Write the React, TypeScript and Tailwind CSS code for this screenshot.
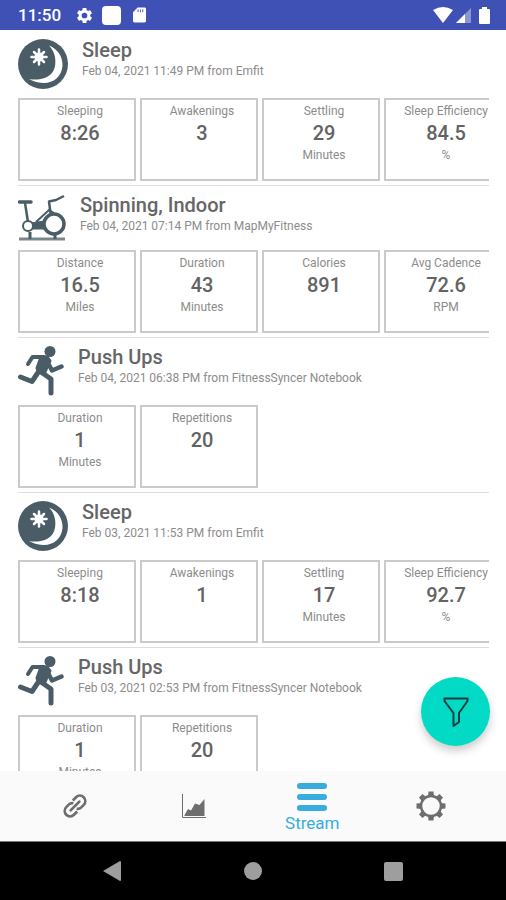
import React from "react";

type Metric = { label: string; value: string; unit?: string };
type Activity = {
  id: number;
  kind: "sleep" | "bike" | "run";
  title: string;
  detail: string;
  metrics: Metric[];
};

const activities: Activity[] = [
  {
    id: 1,
    kind: "sleep",
    title: "Sleep",
    detail: "Feb 04, 2021 11:49 PM from Emfit",
    metrics: [
      { label: "Sleeping", value: "8:26" },
      { label: "Awakenings", value: "3" },
      { label: "Settling", value: "29", unit: "Minutes" },
      { label: "Sleep Efficiency", value: "84.5", unit: "%" },
    ],
  },
  {
    id: 2,
    kind: "bike",
    title: "Spinning, Indoor",
    detail: "Feb 04, 2021 07:14 PM from MapMyFitness",
    metrics: [
      { label: "Distance", value: "16.5", unit: "Miles" },
      { label: "Duration", value: "43", unit: "Minutes" },
      { label: "Calories", value: "891" },
      { label: "Avg Cadence", value: "72.6", unit: "RPM" },
    ],
  },
  {
    id: 3,
    kind: "run",
    title: "Push Ups",
    detail: "Feb 04, 2021 06:38 PM from FitnessSyncer Notebook",
    metrics: [
      { label: "Duration", value: "1", unit: "Minutes" },
      { label: "Repetitions", value: "20" },
    ],
  },
  {
    id: 4,
    kind: "sleep",
    title: "Sleep",
    detail: "Feb 03, 2021 11:53 PM from Emfit",
    metrics: [
      { label: "Sleeping", value: "8:18" },
      { label: "Awakenings", value: "1" },
      { label: "Settling", value: "17", unit: "Minutes" },
      { label: "Sleep Efficiency", value: "92.7", unit: "%" },
    ],
  },
  {
    id: 5,
    kind: "run",
    title: "Push Ups",
    detail: "Feb 03, 2021 02:53 PM from FitnessSyncer Notebook",
    metrics: [
      { label: "Duration", value: "1", unit: "Minutes" },
      { label: "Repetitions", value: "20" },
    ],
  },
];

function SleepIcon() {
  return (
    <svg width="50" height="50" viewBox="0 0 50 50" className="shrink-0" aria-hidden="true">
      <circle cx="25" cy="25" r="25" fill="#4a5d66" />
      <path d="M31 6.500C40 10 45 18 44.500 27C43.500 38 35 44.500 25 44C19 43.500 15 42.500 11 40C19 41.500 28 40 33 35C37 31 38 25 37 18C36.200 13.500 34 9.500 31 6.500Z" fill="#fff" />
      <g stroke="#fff" strokeWidth="2.500" strokeLinecap="round">
        <path d="M21 10.500V25.500M13.500 18H28.500M16 13L26 23M26 13L16 23" />
      </g>
      <circle cx="21" cy="18" r="4.500" fill="#fff" />
    </svg>
  );
}

function BikeIcon() {
  return (
    <svg width="48" height="47" viewBox="0 0 48 47" className="shrink-0" fill="none" stroke="#4a5d66" aria-hidden="true">
      <path d="M1 45H47" stroke="#7c878d" strokeWidth="3" />
      <path d="M12 38V45M37 38V45" strokeWidth="3" />
      <path d="M1.500 8H13" strokeWidth="3.500" strokeLinecap="round" />
      <path d="M7 9L10 28" strokeWidth="2.500" />
      <path d="M32.500 19L31 7.500L38 6L46 2" strokeWidth="2.500" strokeLinejoin="round" />
      <path d="M18 28L31 16L36 19" strokeWidth="2" />
      <path d="M13 29L26 27V35L13 35Z" fill="#4a5d66" strokeWidth="1" />
      <circle cx="10" cy="32" r="5" fill="#fff" strokeWidth="2" />
      <circle cx="36" cy="30" r="10" fill="#fff" strokeWidth="3.500" />
    </svg>
  );
}

function RunIcon() {
  return (
    <svg width="46" height="50" viewBox="0 0 46 50" className="shrink-0" fill="none" stroke="#4a5d66" strokeLinecap="round" strokeLinejoin="round" aria-hidden="true">
      <circle cx="32" cy="5.500" r="5.500" fill="#4a5d66" stroke="none" />
      <path d="M23 11H29L32 15L27 26L20 25L19 22Z" fill="#4a5d66" strokeWidth="3" />
      <path d="M10 18L14.500 11H26" strokeWidth="4" />
      <path d="M30 17L34 24.500L43.500 20.500" strokeWidth="4.500" />
      <path d="M21 25L14 35.500L2.500 31" strokeWidth="5" />
      <path d="M23 26L33 33V47" strokeWidth="5" />
    </svg>
  );
}

function ActivityIcon({ kind }: { kind: Activity["kind"] }) {
  if (kind === "sleep") return <SleepIcon />;
  if (kind === "bike") return <BikeIcon />;
  return <RunIcon />;
}

function MetricCard({ label, value, unit }: Metric) {
  return (
    <li className="h-[83px] w-[118px] shrink-0 border-2 border-[#cacaca] pt-[3px] pl-1.5 text-center text-xs leading-4 text-[#8c8c8c]">
      <p className="whitespace-nowrap">{label}</p>
      <p className="my-0.5 text-xl leading-6 font-medium text-[#636363]">{value}</p>
      {unit && <p>{unit}</p>}
    </li>
  );
}

function ActivityEntry({ activity }: { activity: Activity }) {
  return (
    <article className="border-b border-[#dedede] pt-2 pb-1">
      <header className="flex gap-3.5">
        <ActivityIcon kind={activity.kind} />
        <div className="h-[47px]">
          <h2 className="text-xl leading-[22px] font-medium text-[#666]">{activity.title}</h2>
          <p className="mt-0.5 text-xs leading-4 text-[#8c8c8c]">{activity.detail}</p>
        </div>
      </header>
      <ul className="mt-[9px] flex gap-1 overflow-hidden">
        {activity.metrics.map((m) => (
          <MetricCard key={m.label} {...m} />
        ))}
      </ul>
    </article>
  );
}

const gearTeeth = [0, 45, 90, 135, 180, 225, 270, 315];

function StatusBar() {
  return (
    <header className="flex h-[30px] shrink-0 items-center bg-[#3f51b5] pr-4 pl-[18px] text-white">
      <span className="text-[17px] leading-6 font-medium">11:50</span>
      <svg className="ml-3.5" width="19" height="19" viewBox="0 0 24 24" fill="currentColor" aria-hidden="true">
        <path d="M19.140 12.940c.04-.3.060-.61.060-.94s-.02-.64-.07-.94l2.030-1.580a.49.49 0 0 0 .12-.61l-1.920-3.320a.49.49 0 0 0-.59-.22l-2.390.96a7 7 0 0 0-1.620-.94l-.36-2.540a.48.48 0 0 0-.48-.41h-3.840a.48.48 0 0 0-.47.41l-.36 2.540a7.300 7.300 0 0 0-1.620.94l-2.390-.96a.48.48 0 0 0-.59.22L2.740 8.870a.48.48 0 0 0 .12.61l2.030 1.580a6 6 0 0 0 0 1.880l-2.030 1.580a.49.49 0 0 0-.12.61l1.920 3.320c.12.22.37.29.59.22l2.390-.96c.5.380 1.030.7 1.620.94l.36 2.540c.05.240.24.41.48.41h3.840c.24 0 .44-.17.47-.41l.36-2.540a7 7 0 0 0 1.620-.94l2.390.96c.22.080.47 0 .59-.22l1.920-3.320a.48.48 0 0 0-.12-.61zM12 15.600A3.600 3.600 0 1 1 12 8.400a3.600 3.600 0 0 1 0 7.200" />
      </svg>
      <span className="ml-2 size-[19px] rounded-sm bg-white" />
      <svg className="ml-3" width="13" height="16" viewBox="0 0 14 16" aria-hidden="true">
        <path d="M5 0H12.500Q14 0 14 1.500V14.500Q14 16 12.500 16H1.500Q0 16 0 14.500V5Z" fill="#fff" />
        <path d="M5.500 2V5M8 2V5M10.500 2V5" stroke="#3f51b5" />
      </svg>
      <svg className="ml-auto" width="20" height="16" viewBox="0 0 20 16" fill="#fff" aria-hidden="true">
        <path d="M0 3Q10 -3 20 3L10 16Z" />
      </svg>
      <svg className="ml-[3px]" width="15" height="16" viewBox="0 0 15 16" fill="#fff" aria-hidden="true">
        <path d="M0 16L15 1V16Z" opacity=".4" />
        <path d="M0 16L9 7V16Z" />
      </svg>
      <svg className="ml-2" width="11" height="17" viewBox="0 0 11 17" fill="#fff" aria-hidden="true">
        <path d="M3 0H8V2H10Q11 2 11 3V16Q11 17 10 17H1Q0 17 0 16V3Q0 2 1 2H3Z" />
      </svg>
    </header>
  );
}

function TabBar() {
  return (
    <nav className="flex h-[70px] shrink-0 bg-[#fafafa] px-4 text-[#6e6e6e]">
      <button type="button" aria-label="Sources" className="flex flex-1 items-center justify-center">
        <svg width="24" height="24" viewBox="1 1 22 22" fill="none" stroke="currentColor" strokeWidth="2.500">
          <path d="M8 16L16 8" strokeLinecap="round" />
          <path d="M10 7L13 4A4.950 4.950 0 0 1 20 11L17.500 13.500Q16 15 13.500 14.500" />
          <path d="M14 17L11 20A4.950 4.950 0 0 1 4 13L6.500 10.500Q8 9 10.500 9.500" />
        </svg>
      </button>
      <button type="button" aria-label="Charts" className="flex flex-1 items-center justify-center">
        <svg width="24" height="24" viewBox="0 0 24 24" fill="currentColor">
          <path d="M.5 0V23.500H24" fill="none" stroke="currentColor" strokeWidth="1" />
          <path d="M2.500 22V21L6 15L9 16.500L13 9.500L17.500 11L22.500 5V22Z" />
        </svg>
      </button>
      <button type="button" aria-current="page" className="flex flex-1 flex-col items-center pt-3 text-[#38acdd]">
        <svg width="30" height="28" viewBox="0 0 30 28" fill="currentColor" aria-hidden="true">
          <rect width="30" height="6" rx="3" />
          <rect y="11" width="30" height="6" rx="3" />
          <rect y="22" width="30" height="6" rx="3" />
        </svg>
        <span className="text-[17px] leading-6">Stream</span>
      </button>
      <button type="button" aria-label="Settings" className="flex flex-1 items-center justify-center">
        <svg width="30" height="30" viewBox="0 0 30 30" fill="currentColor">
          <circle cx="15" cy="15" r="10" fill="none" stroke="currentColor" strokeWidth="2.500" />
          {gearTeeth.map((angle) => (
            <path key={angle} d="M12 5.500L12.500 .5H17.500L18 5.500Z" transform={`rotate(${angle} 15 15)`} />
          ))}
        </svg>
      </button>
    </nav>
  );
}

function SystemBar() {
  return (
    <nav aria-label="System" className="flex h-[59px] shrink-0 border-t border-[#777] bg-black px-[42px] text-[#9e9e9e]">
      <button type="button" aria-label="Back" className="flex flex-1 items-center justify-center">
        <svg width="18" height="20" viewBox="0 0 18 20" fill="currentColor">
          <path d="M0 10L17 0Q18 0 18 1V19Q18 20 17 20Z" />
        </svg>
      </button>
      <button type="button" aria-label="Home" className="flex flex-1 items-center justify-center">
        <span className="size-[18px] rounded-full bg-current" />
      </button>
      <button type="button" aria-label="Recent" className="flex flex-1 items-center justify-center">
        <span className="size-[19px] rounded-xs bg-current" />
      </button>
    </nav>
  );
}

export default function App() {
  return (
    <div className="flex h-screen flex-col overflow-hidden bg-white font-['Roboto',sans-serif]">
      <StatusBar />
      <div className="relative min-h-0 flex-1">
        <main className="h-full overflow-hidden pt-px pr-[17px] pl-[18px]">
          {activities.map((a) => (
            <ActivityEntry key={a.id} activity={a} />
          ))}
        </main>
        <button
          type="button"
          aria-label="Filter"
          className="absolute right-4 bottom-[25px] flex size-[69px] items-center justify-center rounded-full bg-[#03dac5] shadow-[0_5px_9px_rgba(0,0,0,0.2)]"
        >
          <svg width="26" height="30" viewBox="0 0 26 30" fill="none" stroke="#153f3c" strokeWidth="2" strokeLinejoin="round">
            <path d="M1.500 1.500H24.500V4L16 16V25L10.500 29V16L1.500 4Z" />
          </svg>
        </button>
      </div>
      <TabBar />
      <SystemBar />
    </div>
  );
}
